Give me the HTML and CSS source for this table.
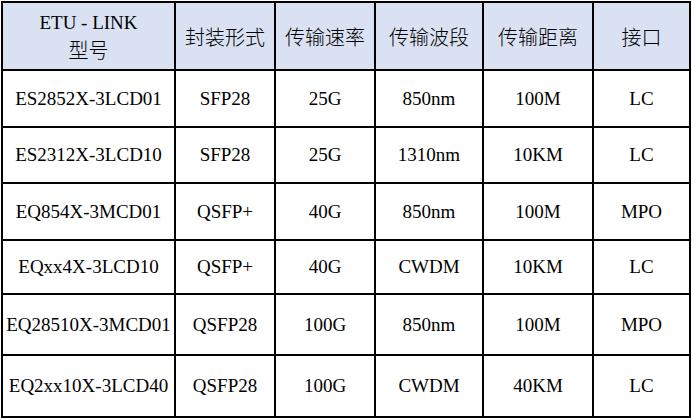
FILE: index.html
```html
<!DOCTYPE html>
<html lang="zh">
<head>
<meta charset="utf-8">
<title>ETU-LINK</title>
<link rel="stylesheet" href="styles.css">
</head>
<body>
<div class="table">
  <div class="cell head model"><span class="latin">ETU - LINK</span><span class="cjk">型号</span></div>
  <div class="cell head cjk">封装形式</div>
  <div class="cell head cjk">传输速率</div>
  <div class="cell head cjk">传输波段</div>
  <div class="cell head cjk">传输距离</div>
  <div class="cell head cjk">接口</div>

  <div class="cell">ES2852X-3LCD01</div>
  <div class="cell">SFP28</div>
  <div class="cell">25G</div>
  <div class="cell">850nm</div>
  <div class="cell">100M</div>
  <div class="cell">LC</div>

  <div class="cell">ES2312X-3LCD10</div>
  <div class="cell">SFP28</div>
  <div class="cell">25G</div>
  <div class="cell">1310nm</div>
  <div class="cell">10KM</div>
  <div class="cell">LC</div>

  <div class="cell">EQ854X-3MCD01</div>
  <div class="cell">QSFP+</div>
  <div class="cell">40G</div>
  <div class="cell">850nm</div>
  <div class="cell">100M</div>
  <div class="cell">MPO</div>

  <div class="cell">EQxx4X-3LCD10</div>
  <div class="cell">QSFP+</div>
  <div class="cell">40G</div>
  <div class="cell">CWDM</div>
  <div class="cell">10KM</div>
  <div class="cell">LC</div>

  <div class="cell">EQ28510X-3MCD01</div>
  <div class="cell">QSFP28</div>
  <div class="cell">100G</div>
  <div class="cell">850nm</div>
  <div class="cell">100M</div>
  <div class="cell">MPO</div>

  <div class="cell">EQ2xx10X-3LCD40</div>
  <div class="cell">QSFP28</div>
  <div class="cell">100G</div>
  <div class="cell">CWDM</div>
  <div class="cell">40KM</div>
  <div class="cell">LC</div>
</div>
</body>
</html>
```

FILE: styles.css
```css
html, body {
  margin: 0;
  padding: 0;
  background: #ffffff;
}

.table {
  display: grid;
  grid-template-columns: 171px 98px 98px 106px 108px 95px;
  grid-template-rows: 66px 55px 54px 55px 52px 59px 60px;
  gap: 2px;
  padding: 2px;
  background: #000000;
  width: fit-content;
  margin: 1px 0 0 1px;
}

.cell {
  display: flex;
  align-items: center;
  justify-content: center;
  text-align: center;
  background: #ffffff;
  color: #000000;
  font-family: "Liberation Serif", "Noto Sans CJK SC", serif;
  font-size: 19px;
  white-space: nowrap;
}

.head {
  background: #d9e1f3;
}

.cjk {
  font-family: "Noto Sans CJK SC", sans-serif;
  font-size: 20px;
  font-weight: 300;
}

.model {
  flex-direction: column;
  line-height: 27px;
}

.latin {
  font-family: "Liberation Serif", serif;
  font-size: 19px;
}
```
